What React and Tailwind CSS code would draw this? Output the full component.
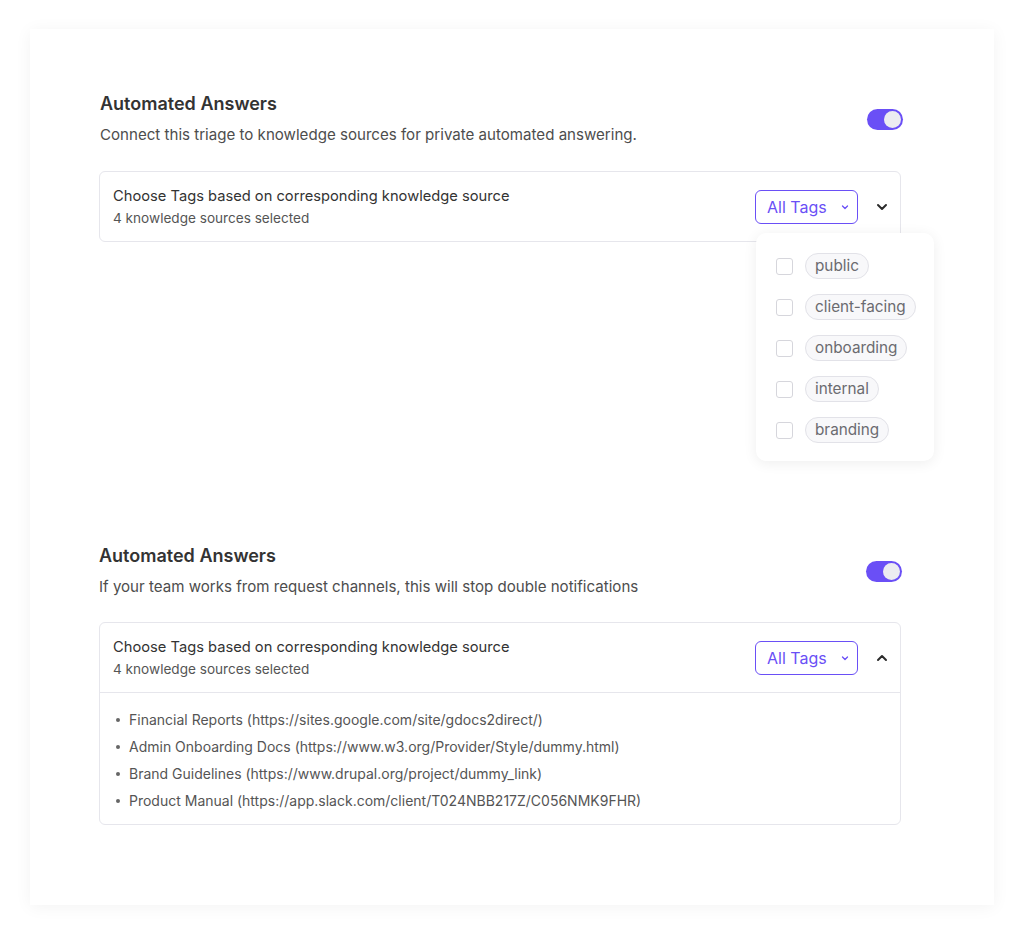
import React from "react";

const font = { fontFamily: "Inter, 'Noto Sans', sans-serif" };

function Toggle() {
  return (
    <div className="mt-[17px] flex h-[21px] w-[36px] items-center justify-end rounded-full bg-[#6a4ff6] pr-[2px]">
      <div className="h-[17px] w-[17px] rounded-full bg-[#ececf1]" />
    </div>
  );
}

function SmallChevron() {
  return (
    <svg width="10" height="10" viewBox="0 0 10 10" className="ml-[13px]">
      <path d="M2.5 4l2.5 2.5L7.5 4" fill="none" stroke="#6a4ff6" strokeWidth="1.3" strokeLinecap="round" strokeLinejoin="round" />
    </svg>
  );
}

function BigChevron({ up }) {
  return (
    <svg width="14" height="14" viewBox="0 0 14 14">
      <path
        d={up ? "M3 9l4-4 4 4" : "M3 5l4 4 4-4"}
        fill="none"
        stroke="#2b2b2b"
        strokeWidth="2"
        strokeLinecap="round"
        strokeLinejoin="round"
      />
    </svg>
  );
}

function Header({ up }) {
  return (
    <div className="flex h-[69px] items-center justify-between pl-[13px] pr-[11px]">
      <div>
        <div className="text-[14.7px] leading-[22px] text-[#333]">Choose Tags based on corresponding knowledge source</div>
        <div className="mt-[1px] text-[13.6px] leading-[20px] text-[#555]">4 knowledge sources selected</div>
      </div>
      <div className="flex items-center">
        <div className="flex h-[34px] w-[103px] items-center rounded-[6px] border border-[#6a4ff6] pl-[11px]">
          <span className="text-[16px] text-[#6a4ff6]">All Tags</span>
          <SmallChevron />
        </div>
        <div className="ml-[17px] flex items-center">
          <BigChevron up={up} />
        </div>
      </div>
    </div>
  );
}

const tags = ["public", "client-facing", "onboarding", "internal", "branding"];
const links = [
  "Financial Reports (https://sites.google.com/site/gdocs2direct/)",
  "Admin Onboarding Docs (https://www.w3.org/Provider/Style/dummy.html)",
  "Brand Guidelines (https://www.drupal.org/project/dummy_link)",
  "Product Manual (https://app.slack.com/client/T024NBB217Z/C056NMK9FHR)",
];

export default function App() {
  return (
    <div className="min-h-screen bg-white pl-[30px] pt-[29px]" style={font}>
      <div className="h-[876px] w-[964px] bg-white pl-[69px] pt-[63px] shadow-[0_2px_16px_rgba(0,0,0,0.05)]">
        {/* Section 1 */}
        <div className="w-[804px]">
          <div className="flex justify-between">
            <div className="pl-[1px]">
              <div className="text-[18px] font-semibold leading-[24px] text-[#333]">Automated Answers</div>
              <div className="mt-[7px] text-[15.1px] leading-[24px] text-[#4d4d4d]">
                Connect this triage to knowledge sources for private automated answering.
              </div>
            </div>
            <Toggle />
          </div>
          <div className="relative mt-[24px] w-[802px] rounded-[6px] border border-[#e6e6ec] bg-white">
            <Header />
            <div className="absolute left-[656px] top-[61px] z-10 w-[178px] rounded-[10px] bg-white px-[20px] pb-[18px] pt-[20px] shadow-[0_2px_14px_rgba(0,0,0,0.07)]">
              <div className="flex flex-col gap-[15px]">
                {tags.map((t) => (
                  <div key={t} className="flex h-[26px] items-center">
                    <div className="h-[17px] w-[17px] shrink-0 rounded-[3px] border border-[#d6d6dc] bg-white" />
                    <div className="ml-[12px] flex h-[26px] items-center whitespace-nowrap rounded-full border border-[#e2e2e8] bg-[#f8f8fa] px-[9px] text-[15.3px] text-[#6b6b70]">
                      {t}
                    </div>
                  </div>
                ))}
              </div>
            </div>
          </div>
        </div>

        {/* Section 2 */}
        <div className="mt-[302px] w-[803px]">
          <div className="flex justify-between">
            <div>
              <div className="text-[18px] font-semibold leading-[24px] text-[#333]">Automated Answers</div>
              <div className="mt-[7px] text-[15.1px] leading-[24px] text-[#4d4d4d]">
                If your team works from request channels, this will stop double notifications
              </div>
            </div>
            <Toggle />
          </div>
          <div className="mt-[23px] w-[802px] rounded-[6px] border border-[#e6e6ec] bg-white">
            <Header up />
            <div className="border-t border-[#e6e6ec] pb-[10px] pl-[14px] pt-[13px]">
              {links.map((l) => (
                <div key={l} className="flex h-[27px] items-center text-[14px] text-[#555]">
                  <span className="mr-[9px] ml-[2px] h-[4px] w-[4px] rounded-full bg-[#666]" />
                  {l}
                </div>
              ))}
            </div>
          </div>
        </div>
      </div>
    </div>
  );
}
